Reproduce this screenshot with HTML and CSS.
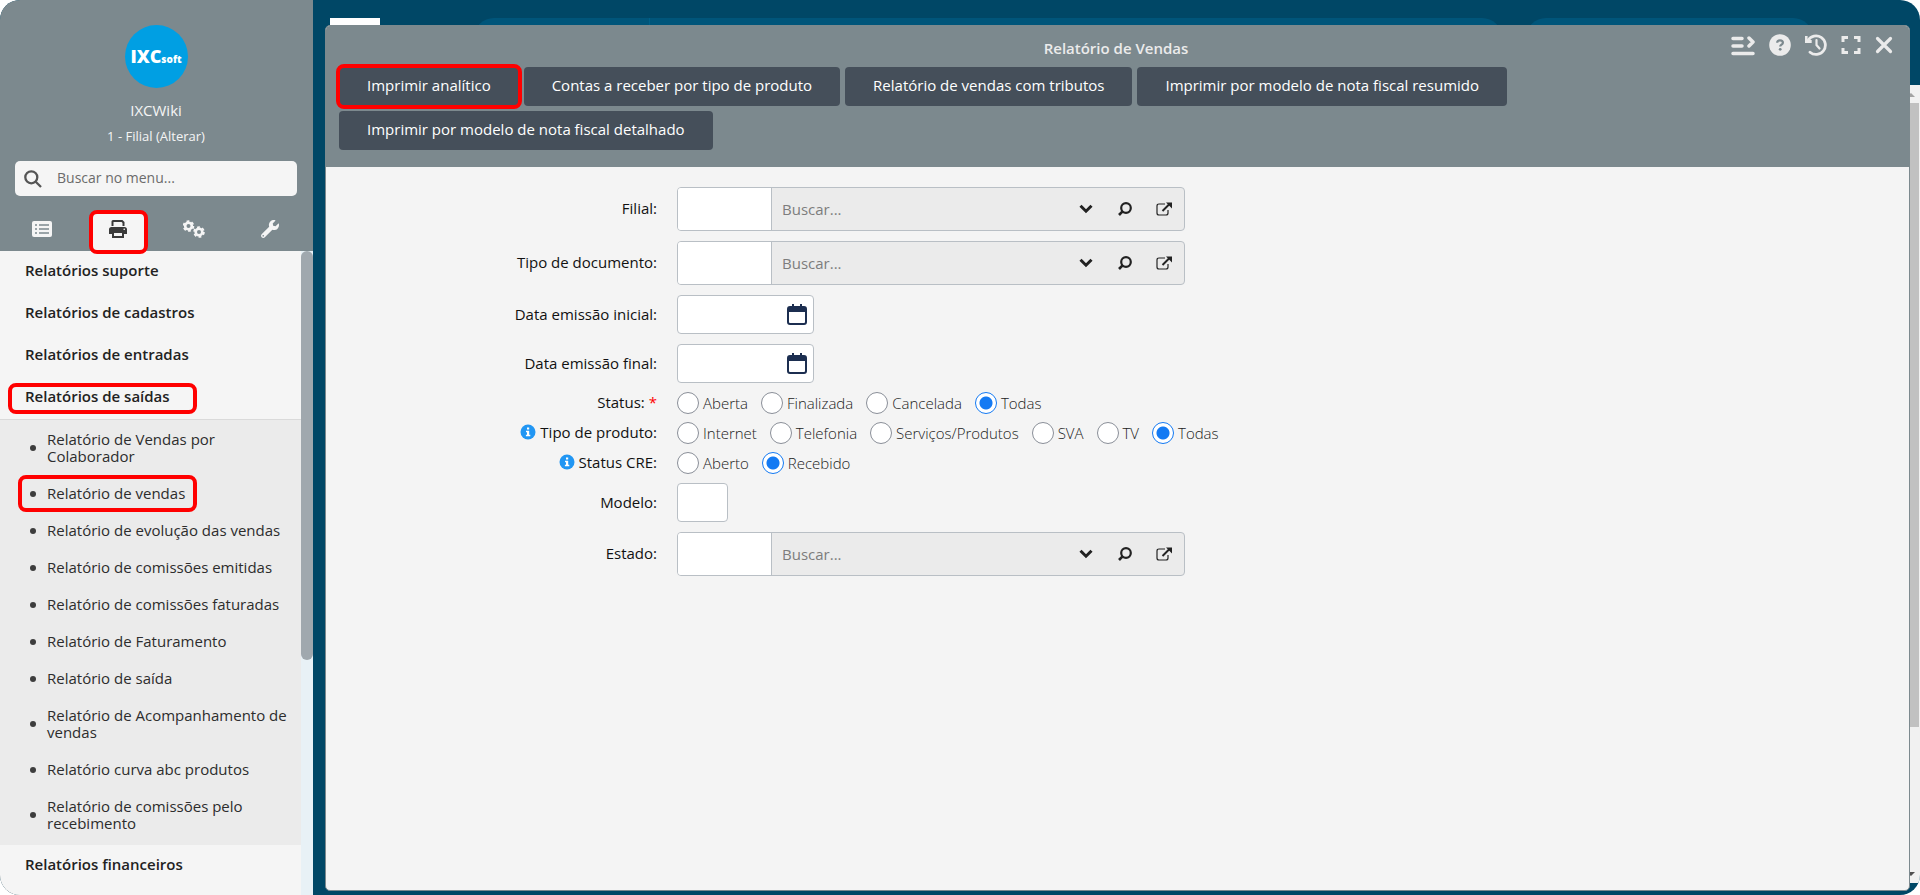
FILE: index.html
```html
<!DOCTYPE html>
<html lang="pt-BR">
<head>
<meta charset="utf-8">
<title>Relatório de Vendas</title>
<link rel="stylesheet" href="styles.css">
</head>
<body>
<svg class="defs" aria-hidden="true">
  <symbol id="chevron" viewBox="0 0 14 10"><path d="M1.5 1.8 7 7.2l5.500-5.400" fill="none" stroke="currentColor" stroke-width="3"/></symbol>
  <symbol id="lens" viewBox="0 0 14 14"><circle cx="8" cy="6" r="4.800" fill="none" stroke="currentColor" stroke-width="2.200"/><path d="M4.600 9.400 1 13" stroke="currentColor" stroke-width="2.600"/></symbol>
  <symbol id="external" viewBox="0 0 16 14"><path d="M9 2H3Q1 2 1 4v7q0 2 2 2h7q2 0 2-2V8" fill="none" stroke="currentColor" stroke-width="1.200"/><path d="m6.500 9 7-7" stroke="currentColor" stroke-width="2"/><path d="M10 .5h6v6z" fill="currentColor"/></symbol>
  <symbol id="calendar" viewBox="0 0 20 22"><path d="M6 0v5M14 0v5" stroke="currentColor" stroke-width="2"/><path d="M3 2h14a3 3 0 0 1 3 3v13a3 3 0 0 1-3 3H3a3 3 0 0 1-3-3V5a3 3 0 0 1 3-3zM2 8v10q0 1 1 1h14q1 0 1-1V8z" fill="currentColor" fill-rule="evenodd"/></symbol>
  <symbol id="info" viewBox="0 0 16 16"><circle cx="8" cy="8" r="7.500" fill="#2196f3"/><path d="M7 3.500h2.200v2H7zM6 6.700h3.200v4H10.300v1.500H5.900v-1.500H7V8.200H6z" fill="#fff"/></symbol>
</svg>
<div class="app">
  <aside class="sidebar">
    <header class="profile">
      <div class="avatar"><b>IXC</b><small>soft</small></div>
      <div class="user">IXCWiki</div>
      <a class="branch" href="#">1 - Filial (Alterar)</a>
      <label class="search">
        <svg width="18" height="18" viewBox="0 0 18 18" fill="none" stroke="#555" stroke-width="2.300"><circle cx="7.300" cy="7.300" r="6"/><path d="m11.700 11.700 5.300 5.300"/></svg>
        <input type="text" placeholder="Buscar no menu..." aria-label="Buscar no menu">
      </label>
      <nav class="tabs">
        <button aria-label="Cadastros"><svg width="20" height="16" viewBox="0 0 20 16"><rect width="20" height="16" rx="2" fill="#f5f5f5"/><path d="M3 4h2M3 8h2M3 12h2M7 4h10M7 8h10M7 12h10" stroke="#7c898e" stroke-width="1.600"/></svg></button>
        <button class="active marked" aria-label="Relatórios"><svg width="18" height="18" viewBox="0 0 18 18"><path d="M3.500 6V1.500Q3.500 1 4 1h9l1.500 1.500V6" fill="none" stroke="#3a3a3a" stroke-width="2"/><path d="M2.500 7h13A2.500 2.500 0 0 1 18 9.500V14h-3v-3H3v3H0V9.500A2.500 2.500 0 0 1 2.500 7z" fill="#3a3a3a"/><path d="M4 12h10v5H4z" fill="none" stroke="#3a3a3a" stroke-width="2"/><circle cx="15.200" cy="9.200" r=".8" fill="#fff"/></svg></button>
        <button aria-label="Configurações"><svg width="22" height="18" viewBox="0 0 22 18" fill="none" stroke="#f5f5f5"><circle cx="5.500" cy="6" r="3.300" stroke-width="2.600"/><circle cx="5.500" cy="6" r="4.900" stroke-width="1.800" stroke-dasharray="2.800 2.330"/><circle cx="16" cy="12" r="3.300" stroke-width="2.600"/><circle cx="16" cy="12" r="4.900" stroke-width="1.800" stroke-dasharray="2.800 2.330"/></svg></button>
        <button aria-label="Ferramentas"><svg width="18" height="18" viewBox="0 0 512 512"><path fill="#f5f5f5" fill-rule="evenodd" d="M507.700 109.100c-2.200-9-13.500-12.100-20.100-5.500l-74.400 74.400-67.900-11.300L334 98.900l74.400-74.400c6.600-6.600 3.400-17.900-5.700-20.200-47.400-11.700-99.600.9-136.600 37.900-39.600 39.600-50.500 97.100-34.100 147.200L18.700 402.800c-25 25-25 65.500 0 90.500s65.500 25 90.500 0l213.200-213.200c50.100 16.700 107.500 5.700 147.400-34.200 37.100-37.100 49.700-89.300 37.900-136.800zM64 472a24 24 0 1 1 0-48 24 24 0 0 1 0 48z"/></svg></button>
      </nav>
    </header>
    <div class="menu">
      <nav class="menu-list">
        <a class="group" href="#">Relatórios suporte</a>
        <a class="group" href="#">Relatórios de cadastros</a>
        <a class="group" href="#">Relatórios de entradas</a>
        <a class="group group-marked" href="#">Relatórios de saídas</a>
        <ul class="sub">
          <li><a href="#">Relatório de Vendas por Colaborador</a></li>
          <li class="item-marked"><a href="#">Relatório de vendas</a></li>
          <li><a href="#">Relatório de evolução das vendas</a></li>
          <li><a href="#">Relatório de comissões emitidas</a></li>
          <li><a href="#">Relatório de comissões faturadas</a></li>
          <li><a href="#">Relatório de Faturamento</a></li>
          <li><a href="#">Relatório de saída</a></li>
          <li><a href="#">Relatório de Acompanhamento de vendas</a></li>
          <li><a href="#">Relatório curva abc produtos</a></li>
          <li><a href="#">Relatório de comissões pelo recebimento</a></li>
        </ul>
        <a class="group" href="#">Relatórios financeiros</a>
      </nav>
      <div class="menu-scroll"><div class="menu-thumb"></div></div>
    </div>
  </aside>

  <main class="desktop">
    <div class="topbar"><span class="logo-block"></span><span class="pill pill-wide"></span><span class="pill pill-small"></span></div>
    <div class="page-scroll">
      <svg width="18" height="18" viewBox="0 0 18 18"><path d="m9 8 4 4H4z" fill="#a3a3a3"/></svg>
      <div class="page-thumb"></div>
      <svg class="down" width="18" height="18" viewBox="0 0 18 18"><path d="m9 11 4-4H4z" fill="#505050"/></svg>
    </div>

    <section class="window">
      <header class="window-head">
        <div class="title-row">
          <h1>Relatório de Vendas</h1>
          <div class="controls">
            <button aria-label="Menu"><svg width="24" height="22" viewBox="0 0 24 22" fill="none" stroke="#ebebeb" stroke-width="3.500" stroke-linecap="round"><path d="M2 4.500h9M2 12h9M2 19.500h20M18 4l4 4-4 4" stroke-linejoin="round"/></svg></button>
            <button aria-label="Ajuda"><svg width="22" height="22" viewBox="0 0 22 22"><circle cx="11" cy="11" r="10.800" fill="#ebebeb"/><path d="M8.200 8.800c0-1.600 1.100-2.500 2.800-2.500s2.900.9 2.900 2.400c0 2-2.700 2-2.700 3.900" fill="none" stroke="#7c898e" stroke-width="2.200"/><circle cx="11.200" cy="15.300" r="1.400" fill="#7c898e"/></svg></button>
            <button aria-label="Histórico"><svg width="22" height="22" viewBox="0 0 22 22" fill="none" stroke="#ebebeb" stroke-width="2.800" stroke-linecap="round"><path d="M3 6.500A9.300 9.300 0 1 1 5 18.200"/><path d="M1.200 2v5.500h5.500" stroke-linecap="butt"/><path d="M11.500 6v5l3 3.500" stroke-width="2.200"/></svg></button>
            <button aria-label="Tela cheia"><svg width="20" height="20" viewBox="0 0 20 20" fill="none" stroke="#ebebeb" stroke-width="3"><path d="M2 7V2.500h5M13 2.500h5V7M18 13v4.500h-5M7 17.500H2V13"/></svg></button>
            <button aria-label="Fechar"><svg width="18" height="18" viewBox="0 0 18 18" stroke="#ebebeb" stroke-width="3.200" stroke-linecap="round"><path d="m2.500 2.500 13 13M15.500 2.500l-13 13"/></svg></button>
          </div>
        </div>
        <div class="toolbar">
          <button class="action-marked">Imprimir analítico</button>
          <button>Contas a receber por tipo de produto</button>
          <button>Relatório de vendas com tributos</button>
          <button>Imprimir por modelo de nota fiscal resumido</button>
          <button>Imprimir por modelo de nota fiscal detalhado</button>
        </div>
      </header>
      <form class="form">
        <label class="name" for="filial">Filial:</label>
        <div class="lookup"><input id="filial" type="text"><input type="text" placeholder="Buscar..." aria-label="Buscar filial"><button type="button" aria-label="Abrir lista"><svg width="14" height="10"><use href="#chevron"/></svg></button><button type="button" aria-label="Pesquisar"><svg width="14" height="14"><use href="#lens"/></svg></button><button type="button" aria-label="Abrir cadastro"><svg width="16" height="14"><use href="#external"/></svg></button></div>

        <label class="name" for="doc">Tipo de documento:</label>
        <div class="lookup"><input id="doc" type="text"><input type="text" placeholder="Buscar..." aria-label="Buscar tipo de documento"><button type="button" aria-label="Abrir lista"><svg width="14" height="10"><use href="#chevron"/></svg></button><button type="button" aria-label="Pesquisar"><svg width="14" height="14"><use href="#lens"/></svg></button><button type="button" aria-label="Abrir cadastro"><svg width="16" height="14"><use href="#external"/></svg></button></div>

        <label class="name" for="inicio">Data emissão inicial:</label>
        <div class="date"><input id="inicio" type="text"><button type="button" aria-label="Calendário"><svg width="20" height="22"><use href="#calendar"/></svg></button></div>

        <label class="name" for="fim">Data emissão final:</label>
        <div class="date"><input id="fim" type="text"><button type="button" aria-label="Calendário"><svg width="20" height="22"><use href="#calendar"/></svg></button></div>

        <span class="name" id="l-status">Status: <i>*</i></span>
        <div class="radios" role="radiogroup" aria-labelledby="l-status">
          <label><input type="radio" name="status">Aberta</label>
          <label><input type="radio" name="status">Finalizada</label>
          <label><input type="radio" name="status">Cancelada</label>
          <label><input type="radio" name="status" checked>Todas</label>
        </div>

        <span class="name" id="l-tipo"><svg width="16" height="16"><use href="#info"/></svg>Tipo de produto:</span>
        <div class="radios" role="radiogroup" aria-labelledby="l-tipo">
          <label><input type="radio" name="tipo">Internet</label>
          <label><input type="radio" name="tipo">Telefonia</label>
          <label><input type="radio" name="tipo">Serviços/Produtos</label>
          <label><input type="radio" name="tipo">SVA</label>
          <label><input type="radio" name="tipo">TV</label>
          <label><input type="radio" name="tipo" checked>Todas</label>
        </div>

        <span class="name" id="l-cre"><svg width="16" height="16"><use href="#info"/></svg>Status CRE:</span>
        <div class="radios" role="radiogroup" aria-labelledby="l-cre">
          <label><input type="radio" name="cre">Aberto</label>
          <label><input type="radio" name="cre" checked>Recebido</label>
        </div>

        <label class="name" for="modelo">Modelo:</label>
        <input id="modelo" class="short" type="text">

        <label class="name" for="estado">Estado:</label>
        <div class="lookup"><input id="estado" type="text"><input type="text" placeholder="Buscar..." aria-label="Buscar estado"><button type="button" aria-label="Abrir lista"><svg width="14" height="10"><use href="#chevron"/></svg></button><button type="button" aria-label="Pesquisar"><svg width="14" height="14"><use href="#lens"/></svg></button><button type="button" aria-label="Abrir cadastro"><svg width="16" height="14"><use href="#external"/></svg></button></div>
      </form>
    </section>
  </main>
</div>
</body>
</html>
```
FILE: styles.css
```css
*, *::before, *::after { box-sizing: border-box; }
body { margin: 0; background: #fff; font: 15px/20px "Open Sans", "Noto Sans", sans-serif; color: #222; }
button, input { font: inherit; color: inherit; margin: 0; padding: 0; border: 0; background: none; }
button { cursor: pointer; }
a { color: inherit; text-decoration: none; }
svg { display: block; flex: none; }
.defs { display: none; }

.app { display: flex; height: 100vh; border-radius: 20px; overflow: hidden; background: #004766; }

.sidebar { flex: none; width: 313px; display: flex; flex-direction: column; background: #7c898e; }
.profile { display: flex; flex-direction: column; align-items: center; padding: 25px 16px 0 15px; color: #f5f5f5; }
.avatar { width: 63px; height: 63px; border-radius: 50%; background: #009fe3; color: #fff; display: flex; align-items: baseline; justify-content: center; line-height: 63px; }
.avatar b { font-size: 18px; font-weight: 800; }
.avatar small { font-size: 10px; font-weight: 800; }
.user { margin-top: 12px; }
.branch { margin-top: 6px; font-size: 13px; }
.search { display: flex; align-items: center; gap: 15px; align-self: stretch; height: 35px; margin-top: 15px; padding: 0 9px; border-radius: 5px; background: #f5f5f5; }
.search input { flex: 1; min-width: 0; height: 100%; padding-bottom: 2px; font-size: 14px; outline: 0; }
.search input::placeholder { color: #6b6b6b; }
.tabs { display: grid; grid-template-columns: repeat(4, 1fr); align-self: stretch; height: 44px; margin: 11px -11px 0; }
.tabs button { position: relative; display: flex; align-items: center; justify-content: center; }
.active::before { content: ""; position: absolute; inset: 4px 12px 0; background: #f5f5f5; border-radius: 6px 6px 0 0; }
.active svg { position: relative; }
.marked::after, .group-marked::after, .item-marked::after, .action-marked::after { content: ""; position: absolute; border: 4px solid #f00; border-radius: 8px; }
.marked::after { inset: 3px 8px -3px 9px; z-index: 1; }

.menu { flex: 1; min-height: 0; display: flex; }
.menu-list { flex: 1; overflow: hidden; background: #f5f5f5; }
.group { position: relative; display: flex; align-items: center; height: 42px; padding: 0 0 4px 25px; font-weight: 600; }
.group-marked::after { inset: 6px auto 5px 8px; width: 189px; }
.sub { list-style: none; margin: 0; padding: 1px 0 3px; border-top: 1px solid #dadada; background: #ebebeb; }
.sub li { position: relative; display: flex; align-items: center; gap: 11px; padding: 10px 14px 10px 30px; line-height: 17px; color: #2d2d2d; }
.sub li::before { content: ""; flex: none; width: 6px; height: 6px; border-radius: 50%; background: #3d3d3d; }
.item-marked::after { inset: 0 auto 0 18px; width: 179px; }
.menu-scroll { width: 12px; background: #e8f1f6; }
.menu-thumb { height: 409px; border-radius: 6px; background: #a0a8ae; }

.desktop { position: relative; flex: 1; min-width: 0; display: flex; flex-direction: column; align-items: flex-end; padding-bottom: 12px; }
.topbar { align-self: stretch; display: flex; align-items: flex-start; height: 85px; padding: 18px 107px 0 17px; }
.logo-block { width: 50px; height: 20px; background: #fff; }
.pill { height: 40px; border-radius: 20px; background: #00557a; }
.pill-wide { flex: 1; margin-left: 94px; padding-left: 175px; }
.pill-wide::before { content: ""; display: block; width: 1px; height: 100%; background: #006088; }
.pill-small { width: 287px; margin-left: 24px; }
.page-scroll { flex: 1; display: flex; flex-direction: column; width: 18px; padding-right: 1px; background: #f1f1f1; }
.page-thumb { height: 624px; background: #c1c1c1; }
.down { margin-top: auto; }

.window { position: absolute; inset: 25px 10px 4px 12px; border: 1px solid #7c898e; border-radius: 5px; background: #f4f4f4; overflow: hidden; }
.window-head { background: #7c898e; padding: 0 16px 17px 13px; }
.title-row { display: grid; grid-template-columns: 1fr auto 1fr; align-items: start; height: 41px; padding-top: 8px; }
h1 { grid-column: 2; margin: 4px 0 0; font-size: 15px; line-height: 20px; font-weight: 600; color: #ebebeb; }
.controls { display: flex; align-items: center; justify-content: flex-end; gap: 14px; }
.toolbar { display: flex; flex-wrap: wrap; gap: 5px; padding-right: 16px; }
.toolbar button { position: relative; height: 39px; padding: 0 28px 3px; border-radius: 4px; background: #454f5a; color: #fff; white-space: nowrap; }
.toolbar .action-marked::after { inset: -3px; }

.form { display: grid; grid-template-columns: 331px 1fr; gap: 10px 20px; align-items: center; padding-top: 20px; }
.name { display: flex; align-items: center; justify-content: flex-end; gap: 4px; padding-bottom: 2px; line-height: 18px; color: #111; }
.name i { color: #f00; font-style: normal; }
.lookup { display: flex; width: 508px; height: 44px; padding-right: 1px; border: 1px solid #b9bfc5; border-radius: 4px; background: #ebebeb; overflow: hidden; }
.lookup input { flex: 1; min-width: 0; padding: 0 10px; outline: 0; }
.lookup input:first-child { flex: none; width: 94px; background: #fff; border-right: 1px solid #b9bfc5; }
.lookup input::placeholder { color: #7d7d7d; }
.lookup button { width: 39px; display: flex; align-items: center; justify-content: center; }
.date { display: flex; width: 137px; height: 39px; border: 1px solid #b9bfc5; border-radius: 4px; background: #fff; overflow: hidden; }
.date input { flex: 1; min-width: 0; padding: 0 8px; outline: 0; }
.date button { width: 32px; display: flex; align-items: center; justify-content: center; color: #1c2e50; }
.short { width: 51px; height: 39px; border: 1px solid #b9bfc5; border-radius: 4px; background: #fff; padding: 0 8px; }
.radios { display: flex; gap: 13px; height: 20px; color: #222; font-weight: 300; }
.radios label { display: flex; align-items: center; gap: 4px; }
.radios input { appearance: none; flex: none; width: 22px; height: 22px; border: 1px solid #8a8f98; border-radius: 50%; background: #fff; }
.radios input:checked { border-color: #147af3; background: radial-gradient(circle, #147af3 6px, #fff 7px); }
```
